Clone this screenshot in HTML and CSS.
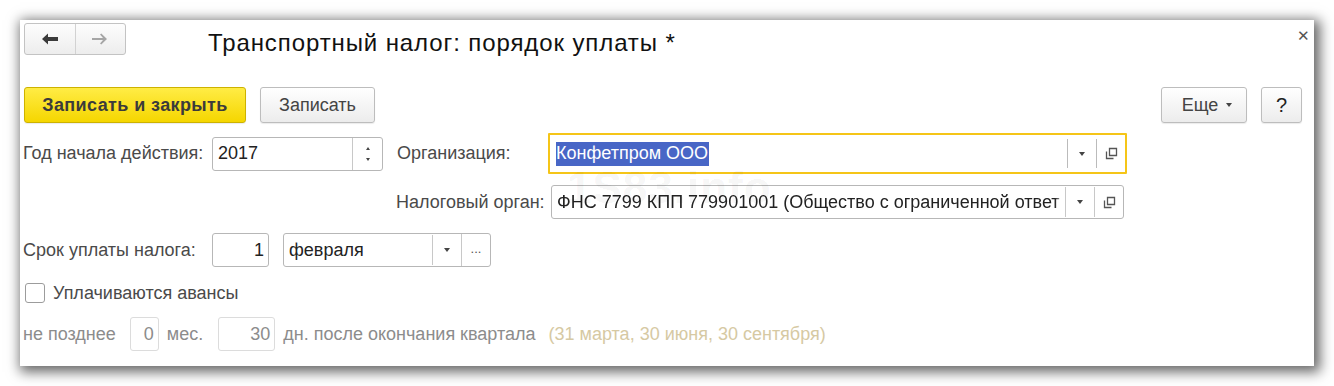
FILE: index.html
```html
<!DOCTYPE html>
<html lang="ru">

<head>
    <meta charset="UTF-8">
    <meta name="viewport" content="width=device-width, initial-scale=1.0">
    <link rel="stylesheet" href="styles.css">
</head>

<body>
    <div class="window">
        <div class="head">
            <div class="nav">
                <div class="nav-btn back">
                    <svg width="18" height="14" viewBox="0 0 18 14"><path d="M1 7 L7 1.5 L7 5 L17 5 L17 9 L7 9 L7 12.5 Z" fill="#3a3a3a"/></svg>
                </div>
                <div class="nav-btn fwd">
                    <svg width="18" height="14" viewBox="0 0 18 14"><path d="M1 6 L12 6 L9 2.5 L10.3 1.5 L16 7 L10.3 12.5 L9 11.5 L12 8 L1 8 Z" fill="#a6a6a6"/></svg>
                </div>
            </div>
            <h2 class="title">Транспортный налог: порядок уплаты *</h2>
            <div class="close">&#x2715;</div>
        </div>

        <div class="toolbar">
            <button class="btn btn-main">Записать и закрыть</button>
            <button class="btn btn-save">Записать</button>
            <div class="spacer"></div>
            <button class="btn btn-more">Еще <span class="tri"></span></button>
            <button class="btn btn-help">?</button>
        </div>

        <div class="row row-1">
            <span class="label lbl-year">Год начала действия:</span>
            <div class="field year">
                <span class="val">2017</span>
                <div class="spin">
                    <span class="tri up"></span>
                    <span class="tri"></span>
                </div>
            </div>
            <span class="label lbl-org">Организация:</span>
            <div class="field org">
                <span class="val"><span class="sel">Конфетпром ООО</span></span>
                <div class="part drop"><span class="tri"></span></div>
                <div class="part open">
                    <svg width="13" height="13" viewBox="0 0 13 13"><path d="M4.5 1.5 H11.5 V8.5 H4.5 Z M1.5 4.5 V11.5 H8.5" fill="none" stroke="#555" stroke-width="1.3"/></svg>
                </div>
            </div>
        </div>

        <div class="row row-2">
            <span class="label lbl-tax">Налоговый орган:</span>
            <div class="field tax">
                <span class="val fade">ФНС 7799 КПП 779901001 (Общество с ограниченной ответ</span>
                <div class="part drop"><span class="tri"></span></div>
                <div class="part open">
                    <svg width="13" height="13" viewBox="0 0 13 13"><path d="M4.5 1.5 H11.5 V8.5 H4.5 Z M1.5 4.5 V11.5 H8.5" fill="none" stroke="#555" stroke-width="1.3"/></svg>
                </div>
            </div>
            <div class="watermark">1S83.info</div>
        </div>

        <div class="row row-3">
            <span class="label lbl-year">Срок уплаты налога:</span>
            <div class="field day"><span class="val right">1</span></div>
            <div class="field month">
                <span class="val">февраля</span>
                <div class="part drop"><span class="tri"></span></div>
                <div class="part dots">...</div>
            </div>
        </div>

        <div class="row row-4">
            <span class="check"></span>
            <span class="label">Уплачиваются авансы</span>
        </div>

        <div class="row row-5">
            <span class="label dim">не позднее</span>
            <div class="field small mon"><span class="val right">0</span></div>
            <span class="label dim">мес.</span>
            <div class="field small days"><span class="val right">30</span></div>
            <span class="label dim">дн. после окончания квартала</span>
            <span class="label hint">(31 марта, 30 июня, 30 сентября)</span>
        </div>
    </div>
</body>

</html>
```

FILE: styles.css
```css
* {
    box-sizing: border-box;
    margin: 0;
    padding: 0;
    font-family: "Liberation Sans", Arial, sans-serif;
}

body {
    background-color: #fff;
    padding: 20px;
}

.window {
    position: relative;
    width: 1294px;
    height: 346px;
    background-color: #fff;
    box-shadow: 3px 3px 12px 3px rgba(0, 0, 0, 0.6);
    padding: 3px 12px 0 3px;
}

.head {
    display: flex;
    align-items: center;
    height: 32px;
}

.nav {
    display: flex;
    margin-left: 1px;
    width: 102px;
    height: 32px;
    border: 1px solid #c3c3c3;
    border-radius: 3px;
    background: linear-gradient(#fdfdfd, #ededed);
}

.nav-btn {
    flex: 1;
    display: flex;
    align-items: center;
    justify-content: center;
}

.nav-btn.back {
    border-right: 1px solid #d2d2d2;
}

.title {
    margin-left: 82px;
    margin-top: 8px;
    font-size: 24px;
    letter-spacing: 0.9px;
    font-weight: normal;
    color: #111;
}

.close {
    margin-left: auto;
    margin-right: -8px;
    margin-top: -6px;
    font-size: 15px;
    color: #555;
}

.toolbar {
    display: flex;
    align-items: center;
    margin-top: 32px;
    height: 36px;
}

.btn {
    height: 36px;
    border: 1px solid #bdbdbd;
    border-radius: 3px;
    background: linear-gradient(#ffffff, #ececec);
    font-size: 18px;
    color: #444;
    padding: 0 16px;
    box-shadow: 0 1px 1px rgba(0, 0, 0, 0.08);
}

.btn-main {
    margin-left: 1px;
    width: 222px;
    background: linear-gradient(#ffec45, #f5d600);
    border-color: #cdb200;
    font-weight: bold;
    letter-spacing: 0.4px;
    color: #3b3b3b;
    padding: 0;
}

.btn-save {
    margin-left: 14px;
    width: 115px;
    padding: 0;
}

.spacer {
    flex: 1;
}

.btn-more {
    width: 86px;
    display: flex;
    align-items: center;
    justify-content: center;
    gap: 8px;
    padding: 0 0 0 6px;
}

.btn-help {
    width: 41px;
    margin-left: 14px;
    font-size: 20px;
    color: #222;
    padding: 0;
}

.tri {
    display: inline-block;
    width: 0;
    height: 0;
    border-left: 3.5px solid transparent;
    border-right: 3.5px solid transparent;
    border-top: 4px solid #444;
}

.tri.up {
    border-top: none;
    border-bottom: 4px solid #444;
}

.row {
    position: relative;
    display: flex;
    align-items: center;
}

.label {
    font-size: 18px;
    color: #4a4a4a;
    white-space: nowrap;
}

.field {
    display: flex;
    align-items: stretch;
    height: 34px;
    border: 1px solid #b7b7b7;
    border-radius: 3px;
    background: #fff;
}

.val {
    flex: 1;
    display: flex;
    align-items: center;
    padding: 0 5px;
    font-size: 18px;
    color: #222;
    white-space: nowrap;
    overflow: hidden;
}

.val.right {
    justify-content: flex-end;
    padding-right: 4px;
}

.part {
    width: 29px;
    display: flex;
    align-items: center;
    justify-content: center;
    border-left: 1px solid #c8c8c8;
    margin: 1px 0;
}

.row-1 {
    margin-top: 10px;
    height: 41px;
}

.lbl-year {
    width: 189px;
}

.year {
    width: 171px;
}

.spin {
    width: 30px;
    border-left: 1px solid #c8c8c8;
    display: flex;
    flex-direction: column;
    align-items: center;
    justify-content: center;
    gap: 8px;
}

.spin .tri {
    border-left-width: 2.5px;
    border-right-width: 2.5px;
    border-top-width: 3px;
    border-bottom-width: 3px;
}

.lbl-org {
    margin-left: 14px;
    width: 151px;
}

.org {
    width: 579px;
    height: 41px;
    border: 2px solid #f5c518;
    border-radius: 1px;
}

.org .val {
    padding-left: 6px;
}

.sel {
    background-color: #4866c6;
    color: #fff;
    padding: 1px 1px 2px 0;
}

.org .drop {
    width: 29px;
    margin: 4px 0;
    border-left-color: #bbb;
}

.org .open {
    margin: 4px 0;
    border-left-color: #bbb;
}

.row-2 {
    margin-top: 11px;
    height: 34px;
}

.lbl-tax {
    margin-left: 373px;
    width: 155px;
}

.tax {
    width: 573px;
}

.fade {
    -webkit-mask-image: linear-gradient(to left, transparent 0, #000 10px);
    mask-image: linear-gradient(to left, transparent 0, #000 10px);
    padding-right: 0;
}

.watermark {
    position: absolute;
    z-index: 2;
    left: 544px;
    top: -22px;
    font-size: 44px;
    font-weight: bold;
    color: rgba(0, 0, 0, 0.05);
    letter-spacing: 1px;
    pointer-events: none;
}

.row-3 {
    margin-top: 14px;
    height: 34px;
}

.day {
    width: 57px;
}

.month {
    width: 208px;
    margin-left: 14px;
}

.month .drop {
    width: 29px;
}

.dots {
    border-left: 1px solid #c8c8c8;
    color: #555;
    font-size: 13px;
    align-items: flex-end;
    padding-bottom: 10px;
    margin: 0;
}

.row-4 {
    margin-top: 16px;
    height: 20px;
}

.check {
    width: 20px;
    height: 20px;
    margin-left: 2px;
    margin-right: 8px;
    border: 1px solid #9c9c9c;
    border-radius: 3px;
    background: #fff;
}

.row-5 {
    margin-top: 14px;
    height: 34px;
}

.dim {
    color: #8c8c8c;
}

.small {
    border-color: #dcdcdc;
}

.small .val {
    color: #8c8c8c;
}

.mon {
    width: 29px;
    margin: 0 8px 0 14px;
}

.days {
    width: 57px;
    margin: 0 8px 0 15px;
}

.hint {
    margin-left: 13px;
    color: #d6c9a3;
}
```
